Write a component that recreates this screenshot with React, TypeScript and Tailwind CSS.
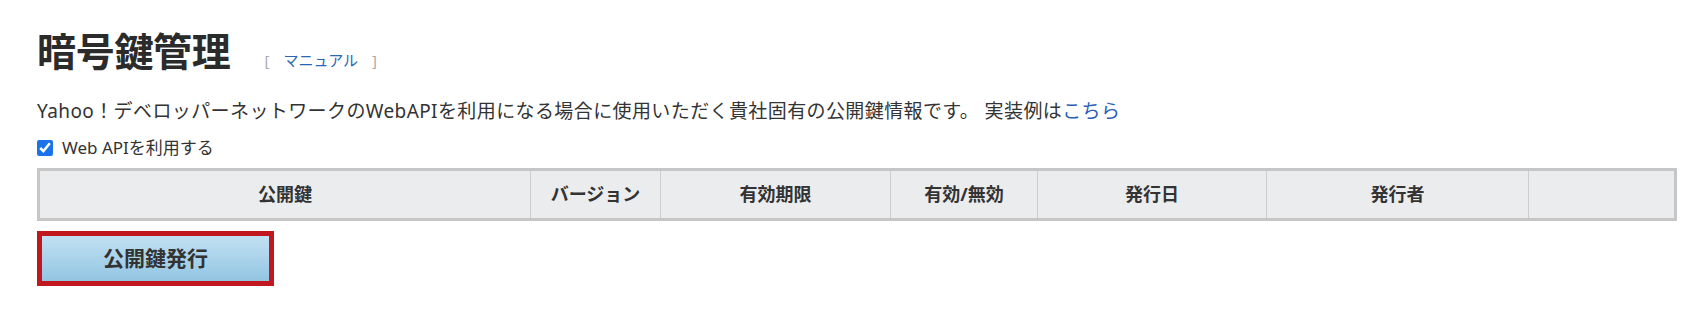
import React from 'react';

const COLUMNS = [
  { label: '公開鍵', w: 'w-[490px]' },
  { label: 'バージョン', w: 'w-[130px]' },
  { label: '有効期限', w: 'w-[230px]' },
  { label: '有効/無効', w: 'w-[147px]' },
  { label: '発行日', w: 'w-[229px]' },
  { label: '発行者', w: 'w-[262px]' },
  { label: '', w: 'flex-1' },
];

export default function App() {
  return (
    <div className="min-h-screen bg-white text-[#333] pl-[37px] pr-[20px] pt-[28px] font-['Noto_Sans','Noto_Sans_CJK_JP',sans-serif]">
      {/* Title */}
      <div className="flex items-baseline">
        <h1 className="text-[39px] leading-[46px] font-bold tracking-[-0.3px] text-[#2b2b2b]">暗号鍵管理</h1>
        <span className="ml-[34px] text-[15px] text-[#aaa]">
          [<a className="mx-[14px] text-[#2a64b4]">マニュアル</a>]
        </span>
      </div>

      {/* Description */}
      <p className="mt-[23px] text-[19px] leading-[28px] tracking-[0.4px]">
        Yahoo！デベロッパーネットワークのWebAPIを利用になる場合に使用いただく貴社固有の公開鍵情報です。 実装例は
        <a className="text-[#2a5db8]">こちら</a>
      </p>

      <label className="mt-[12px] flex items-center gap-[9px] text-[17px] leading-[22px]">
        <input type="checkbox" defaultChecked className="m-0 size-[16px] accent-[#1a73e8]" />
        Web APIを利用する
      </label>

      {/* Key table header */}
      <div className="mt-[9px] flex h-[53px] border-[3px] border-[#c6c6c6] bg-[#ebecee]">
        {COLUMNS.map((c, i) => (
          <div
            key={i}
            className={`${c.w} flex items-center justify-center text-[18px] font-bold text-[#333] ${i > 0 ? 'border-l border-[#cdcdcd]' : ''}`}
          >
            {c.label}
          </div>
        ))}
      </div>

      {/* Issue button */}
      <button className="mt-[10px] w-[237px] h-[55px] border-[5px] border-[#c1171f] bg-gradient-to-b from-[#c2e1f3] to-[#92c5e2] text-[21px] font-bold text-[#333]">
        公開鍵発行
      </button>
    </div>
  );
}
